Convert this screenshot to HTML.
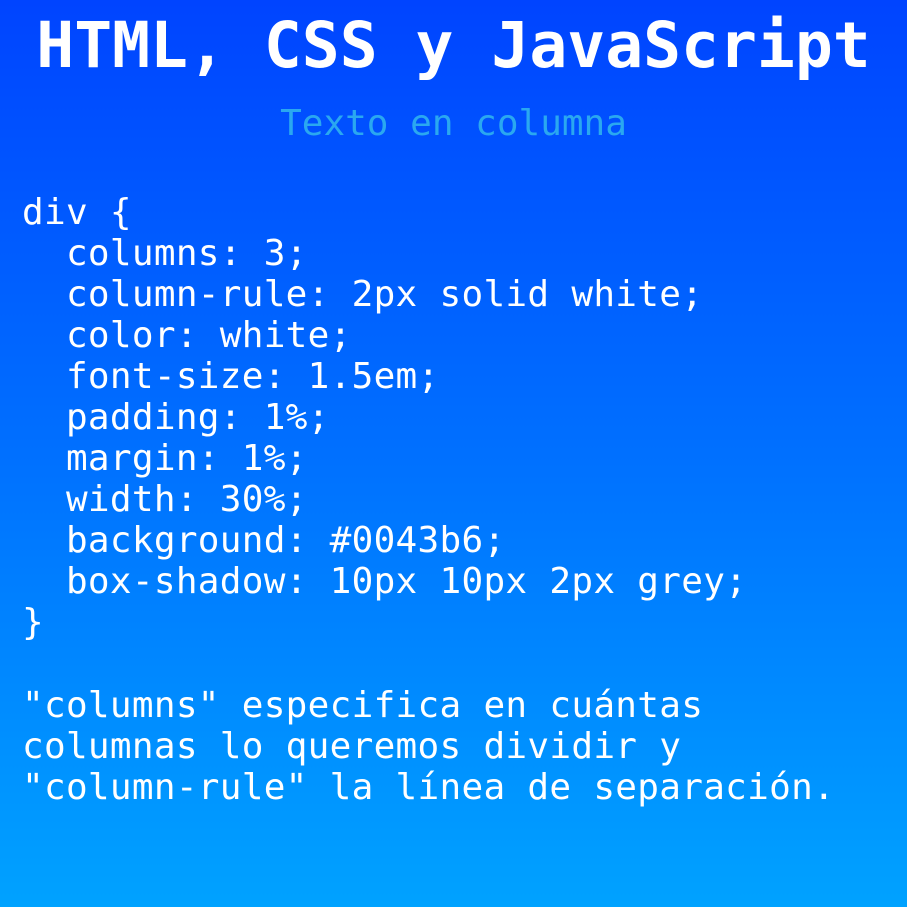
<!DOCTYPE html>
<html><head><meta charset="utf-8"><style>
html,body{margin:0;padding:0}
body{width:907px;height:907px;overflow:hidden;background:linear-gradient(180deg,#0044ff 0%,#0070ff 50%,#00a2ff 100%);font-family:"DejaVu Sans Mono","Liberation Mono",monospace;color:#fff;position:relative}
.t{position:absolute;left:0;width:907px;text-align:center;top:6px;font-size:63px;font-weight:bold;line-height:80px;letter-spacing:0px}
.s{position:absolute;left:0;width:907px;text-align:center;top:103px;font-size:36px;line-height:42px;color:#2aa8f0}
pre{position:absolute;left:22px;margin:0;font-family:inherit;font-size:36px;line-height:41px;letter-spacing:0.3px}
</style></head><body>
<div class="t">HTML, CSS y JavaScript</div>
<div class="s">Texto en columna</div>
<pre style="top:192px">div {
  columns: 3;
  column-rule: 2px solid white;
  color: white;
  font-size: 1.5em;
  padding: 1%;
  margin: 1%;
  width: 30%;
  background: #0043b6;
  box-shadow: 10px 10px 2px grey;
}</pre>
<pre style="top:685px">"columns" especifica en cuántas
columnas lo queremos dividir y
"column-rule" la línea de separación.</pre>
</body></html>
